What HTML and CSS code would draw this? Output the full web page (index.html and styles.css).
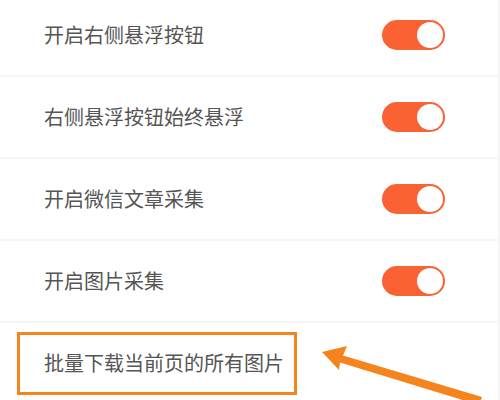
FILE: index.html
```html
<!DOCTYPE html>
<html lang="zh">
<head>
<meta charset="utf-8">
<link rel="stylesheet" href="styles.css">
</head>
<body>
<div class="page">
  <div class="list">
    <div class="row"><span class="label">开启右侧悬浮按钮</span><span class="toggle"><span class="knob"></span></span></div>
    <div class="row"><span class="label">右侧悬浮按钮始终悬浮</span><span class="toggle"><span class="knob"></span></span></div>
    <div class="row"><span class="label">开启微信文章采集</span><span class="toggle"><span class="knob"></span></span></div>
    <div class="row"><span class="label">开启图片采集</span><span class="toggle"><span class="knob"></span></span></div>
    <div class="row last"><div class="highlight"><span class="label">批量下载当前页的所有图片</span></div></div>
  </div>
  <svg class="arrow" width="500" height="400" viewBox="0 0 500 400">
    <polygon fill="#f5841f" points="322,352 347,346 343,355.5 482,397 479,405 340,362.5 339,370"/>
  </svg>
</div>
</body>
</html>
```
FILE: styles.css
```css
html, body {
  margin: 0;
  padding: 0;
}
body {
  background: #f6f6f6;
  font-family: "Noto Sans CJK SC", "Noto Sans", sans-serif;
  overflow: hidden;
}
.page {
  position: relative;
  width: 500px;
  height: 400px;
  overflow: hidden;
}
.list {
  display: flex;
  flex-direction: column;
  gap: 2px;
  margin-top: -5px;
  margin-right: 2px;
}
.row {
  height: 80px;
  background: #fff;
  display: flex;
  align-items: center;
  justify-content: space-between;
  padding: 0 53px 0 44px;
  flex-shrink: 0;
}
.row.last {
  padding-left: 17px;
}
.label {
  font-size: 20px;
  color: #555;
  line-height: 1;
  white-space: nowrap;
}
.toggle {
  width: 63px;
  height: 30px;
  border-radius: 15px;
  background: #fa6133;
  display: flex;
  align-items: center;
  justify-content: flex-end;
  padding-right: 2px;
  box-sizing: border-box;
}
.knob {
  width: 26px;
  height: 26px;
  border-radius: 50%;
  background: #fff;
}
.highlight {
  width: 280px;
  height: 63px;
  box-sizing: border-box;
  border: 3px solid #f5841f;
  display: flex;
  align-items: center;
  padding-left: 24px;
}
.arrow {
  position: absolute;
  left: 0;
  top: 0;
}
```
